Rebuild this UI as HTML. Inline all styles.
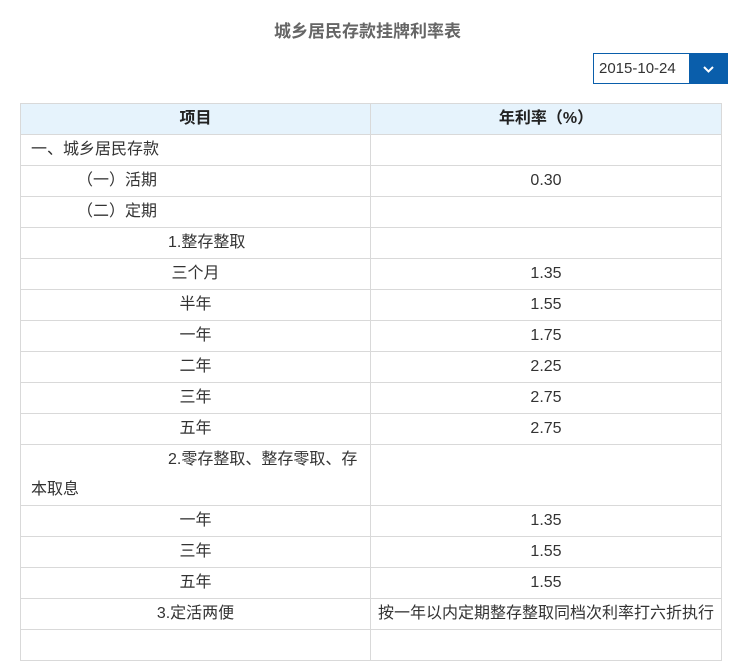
<!DOCTYPE html>
<html><head><meta charset="utf-8"><style>
body{margin:0;background:#fff;font-family:"Liberation Sans","Noto Sans CJK SC",sans-serif;color:#333;overflow:hidden;}
h1{position:absolute;left:0;width:735px;top:17px;margin:0;text-align:center;font-size:17px;font-weight:bold;color:#666;}
.sel{position:absolute;left:593px;top:53px;border:1px solid #0a5eab;border-right:none;font-size:15px;line-height:29px;padding-left:5px;box-sizing:border-box;width:97px;height:31px;}
.btn{position:absolute;left:689px;top:53px;width:39px;height:31px;background:#0a5eab;}
table{position:absolute;left:20px;top:103px;border-collapse:collapse;width:701px;font-size:16px;table-layout:fixed;}
td,th{border:1px solid #d9d9d9;height:30px;padding:0 10px;line-height:30px;}
th{background:#e6f3fc;font-weight:bold;color:#222;text-align:center;}
td.r{text-align:center;}
</style></head><body>
<h1>城乡居民存款挂牌利率表</h1>
<div class="sel">2015-10-24</div>
<div class="btn"><svg width="39" height="31"><path d="M15 14l4.5 4.5L24 14" stroke="#fff" stroke-width="2" fill="none"/></svg></div>
<table>
<colgroup><col style="width:350px"><col style="width:351px"></colgroup>
<tr><th>项目</th><th>年利率（%）</th></tr>
<tr><td>一、城乡居民存款</td><td class="r"></td></tr>
<tr><td style="padding-left:56px">（一）活期</td><td class="r">0.30</td></tr>
<tr><td style="padding-left:56px">（二）定期</td><td class="r"></td></tr>
<tr><td style="padding-left:147px">1.整存整取</td><td class="r"></td></tr>
<tr><td class="r">三个月</td><td class="r">1.35</td></tr>
<tr><td class="r">半年</td><td class="r">1.55</td></tr>
<tr><td class="r">一年</td><td class="r">1.75</td></tr>
<tr><td class="r">二年</td><td class="r">2.25</td></tr>
<tr><td class="r">三年</td><td class="r">2.75</td></tr>
<tr><td class="r">五年</td><td class="r">2.75</td></tr>
<tr><td style="text-indent:137px;white-space:nowrap">2.零存整取、整存零取、存<br><span style="display:inline-block;text-indent:0">本取息</span></td><td class="r"></td></tr>
<tr><td class="r">一年</td><td class="r">1.35</td></tr>
<tr><td class="r">三年</td><td class="r">1.55</td></tr>
<tr><td class="r">五年</td><td class="r">1.55</td></tr>
<tr><td class="r">3.定活两便</td><td class="r" style="padding:0;white-space:nowrap">按一年以内定期整存整取同档次利率打六折执行</td></tr>
<tr><td></td><td></td></tr>
</table>
</body></html>
